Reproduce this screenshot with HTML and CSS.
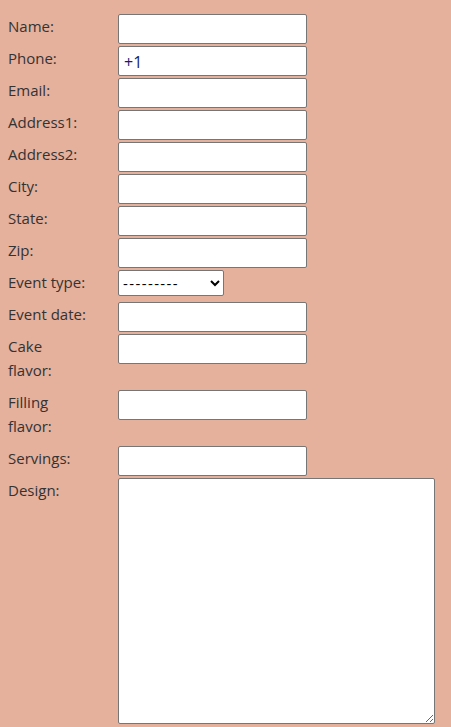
FILE: index.html
```html
<!DOCTYPE html>
<html>
<head>
<meta charset="utf-8">
<link rel="stylesheet" href="styles.css">
</head>
<body>
<form class="form">
  <label class="lbl" for="name"><span>Name:</span></label>
  <input class="field" id="name" type="text">
  <label class="lbl" for="phone"><span>Phone:</span></label>
  <input class="field" id="phone" type="text" value="+1">
  <label class="lbl" for="email"><span>Email:</span></label>
  <input class="field" id="email" type="text">
  <label class="lbl" for="a1"><span>Address1:</span></label>
  <input class="field" id="a1" type="text">
  <label class="lbl" for="a2"><span>Address2:</span></label>
  <input class="field" id="a2" type="text">
  <label class="lbl" for="city"><span>City:</span></label>
  <input class="field" id="city" type="text">
  <label class="lbl" for="state"><span>State:</span></label>
  <input class="field" id="state" type="text">
  <label class="lbl" for="zip"><span>Zip:</span></label>
  <input class="field" id="zip" type="text">
  <label class="lbl" for="etype"><span>Event type:</span></label>
  <select class="pick" id="etype"><option>---------</option></select>
  <label class="lbl" for="edate"><span>Event date:</span></label>
  <input class="field" id="edate" type="text">
  <label class="lbl" for="cake"><span>Cake flavor:</span></label>
  <input class="field" id="cake" type="text">
  <label class="lbl" for="fill"><span>Filling flavor:</span></label>
  <input class="field" id="fill" type="text">
  <label class="lbl" for="serv"><span>Servings:</span></label>
  <input class="field" id="serv" type="text">
  <label class="lbl" for="design"><span>Design:</span></label>
  <textarea class="area" id="design"></textarea>
</form>
</body>
</html>
```
FILE: styles.css
```css
html, body {
  margin: 0;
  padding: 0;
  background: #e5b09c;
}
body {
  padding: 14px 0 0 8px;
  font-family: "Open Sans", "Noto Sans", sans-serif;
  font-size: 15px;
  color: #333333;
}
.form {
  display: grid;
  grid-template-columns: 110px auto;
  row-gap: 2px;
  justify-content: start;
  align-items: start;
}
.lbl {
  line-height: 24px;
  padding-bottom: 6px;
}
.lbl span {
  display: block;
  width: 80px;
}
.field {
  box-sizing: border-box;
  width: 189px;
  height: 30px;
  margin: 0;
  padding: 2px 5px 0;
  border: 1px solid #767676;
  border-radius: 2px;
  background: #fff;
  font-family: "Open Sans", "Noto Sans", sans-serif;
  font-size: 16px;
  color: #1a1a6e;
}
.pick {
  box-sizing: border-box;
  width: 106px;
  height: 26px;
  margin: 0;
  border: 1px solid #767676;
  border-radius: 2px;
  background: #fff;
  font-family: "Open Sans", "Noto Sans", sans-serif;
  font-size: 15px;
  letter-spacing: 1.4px;
  color: #000;
}
.area {
  box-sizing: border-box;
  width: 317px;
  height: 246px;
  margin: 0;
  border: 1px solid #767676;
  border-radius: 2px;
  background: #fff;
}
```
